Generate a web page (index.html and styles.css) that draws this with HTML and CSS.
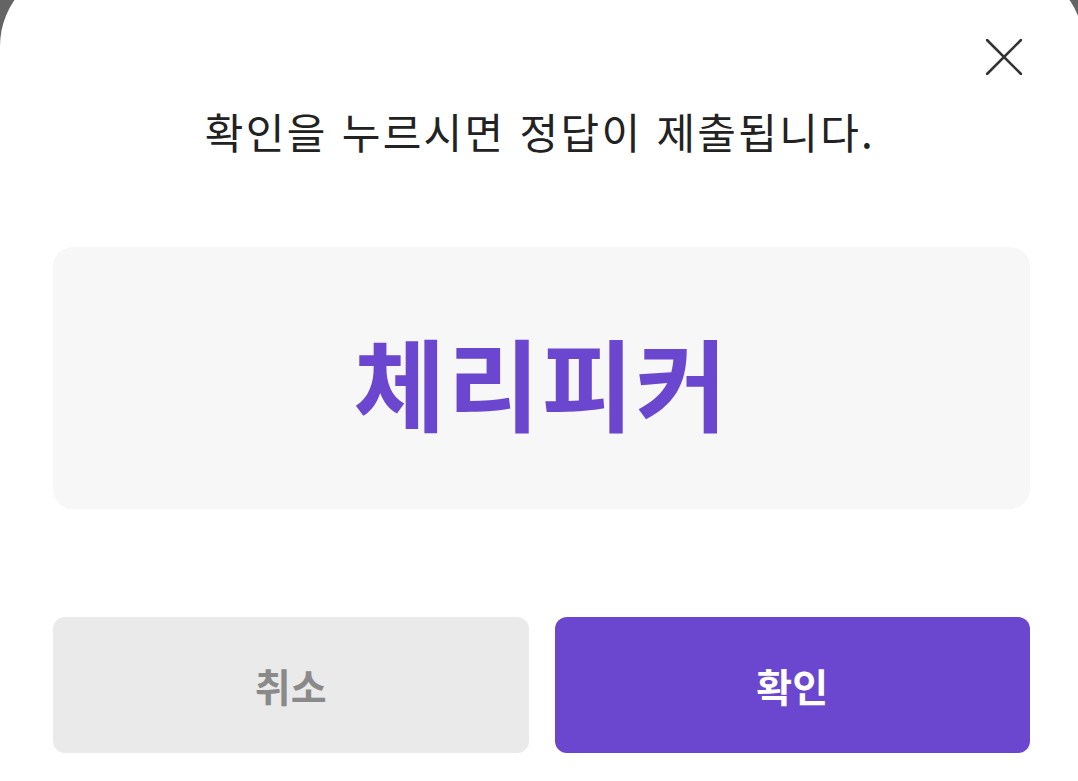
FILE: index.html
```html
<!DOCTYPE html>
<html lang="ko">
<head>
    <meta charset="UTF-8">
    <meta name="viewport" content="width=device-width, initial-scale=1.0">
    <title>정답 제출 확인</title>
    <link rel="stylesheet" href="styles.css">
</head>
<body>
    <div class="sheet">
        <div class="sheet-head">
            <button class="close-btn" aria-label="닫기">
                <svg width="36" height="36" viewBox="0 0 36 36">
                    <path d="M1 1 L35 35 M35 1 L1 35" stroke="#333" stroke-width="2.6" stroke-linecap="round" fill="none"/>
                </svg>
            </button>
        </div>

        <p class="message">확인을 누르시면 정답이 제출됩니다.</p>

        <div class="answer-box">
            <span class="answer">체리피커</span>
        </div>

        <div class="actions">
            <button class="btn btn-cancel">취소</button>
            <button class="btn btn-ok">확인</button>
        </div>
    </div>
</body>
</html>
```

FILE: styles.css
```css
body { margin: 0; background: #646464; font-family: "Noto Sans CJK KR", "Noto Sans", sans-serif; height: 781px; overflow: hidden; }
.sheet { background: #fff; margin: -34px -6px 0 0; border-radius: 80px 80px 0 0; padding: 0 54px 0 53px; height: 815px; box-sizing: border-box; }
.sheet-head { display: flex; justify-content: flex-end; padding-top: 73px; margin-right: 8px; height: 36px; }
.close-btn { background: none; border: none; padding: 0; cursor: pointer; width: 36px; height: 36px; }
.close-btn svg { display: block; }
.message { margin: 29px 0 0; padding-right: 3px; text-align: center; font-size: 42px; line-height: 54px; color: #222; letter-spacing: 2.3px; }
.answer-box { margin-top: 89px; height: 262px; background: #f7f7f8; border-radius: 20px; display: flex; align-items: center; justify-content: center; }
.answer { font-size: 100px; font-weight: 700; color: #6b46ce; letter-spacing: 2px; padding-top: 4px; }
.actions { display: flex; gap: 26px; margin-top: 108px; }
.btn { flex: 1; height: 136px; border: none; border-radius: 12px; font-family: inherit; font-size: 39px; font-weight: 700; cursor: pointer; }
.btn-cancel { background: #eaeaea; color: #8a8a8a; }
.btn-ok { background: #6b46ce; color: #fff; }
```
